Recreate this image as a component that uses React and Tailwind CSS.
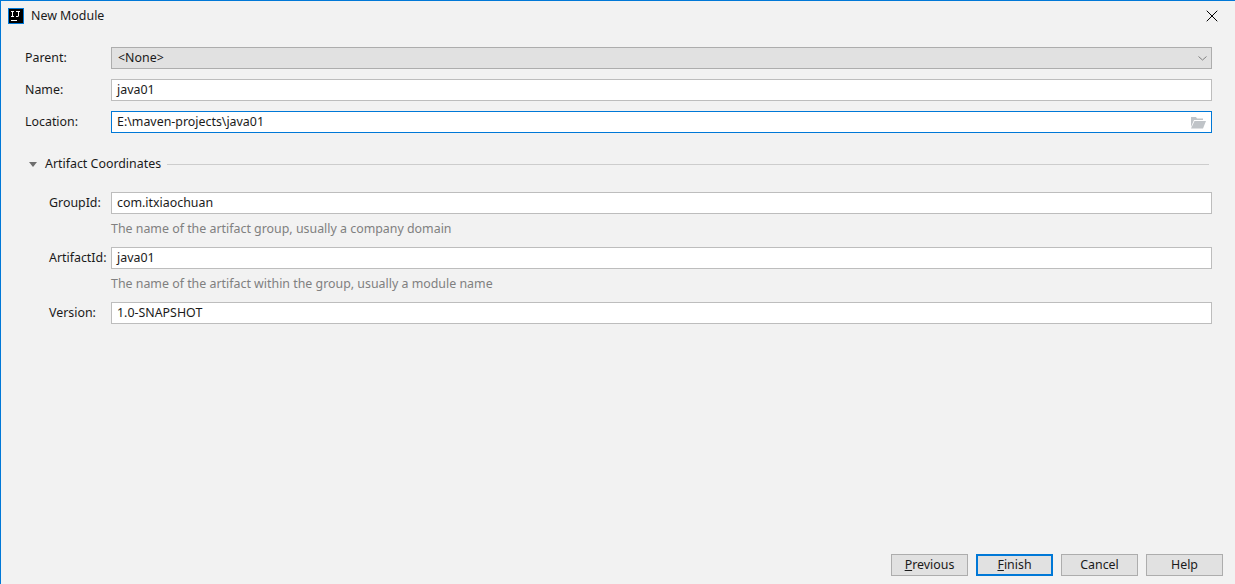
import { X } from "lucide-react";

const font = { fontFamily: '"Noto Sans", sans-serif' };

function Field({ label, value, indent, focused, children }) {
  return (
    <div className="flex h-[22px] items-center">
      <label className={`${indent ? "ml-[48px] w-[62px]" : "ml-[24px] w-[86px]"} text-[#1a1a1a]`}>{label}</label>
      <div
        className={`flex h-full flex-1 items-center border bg-white pl-[5px] pr-[5px] ${
          focused ? "border-[#0078d7]" : "border-[#bdbdbd]"
        }`}
      >
        <span className="flex-1 text-[#1a1a1a]">{value}</span>
        {children}
      </div>
    </div>
  );
}

function Hint({ children }) {
  return <p className="mt-[6px] mb-[9px] ml-[110px] h-[18px] leading-[18px] text-[#808080]">{children}</p>;
}

function Btn({ mnemonic, rest, label, primary }) {
  return (
    <button
      className={`flex h-[22px] w-[77px] items-center justify-center bg-[#e1e1e1] text-[#1a1a1a] ${
        primary ? "border-2 border-[#0078d7]" : "border border-[#adadad]"
      }`}
    >
      {mnemonic ? (
        <>
          <span className="underline">{mnemonic}</span>
          {rest}
        </>
      ) : (
        label
      )}
    </button>
  );
}

export default function App() {
  return (
    <div
      className="flex h-[584px] w-[1235px] flex-col overflow-hidden border-t border-l border-[#0078d7] bg-[#f2f2f2] text-[12.4px] leading-[18px]"
      style={font}
    >
      {/* title bar */}
      <div className="flex h-[29px] items-center pl-[7px] pr-[13px]">
        <svg width="16" height="16" viewBox="0 0 16 16" className="shrink-0">
          <rect x="0" y="0" width="16" height="16" fill="#0078d7" />
          <rect x="1" y="1" width="14" height="14" fill="#000" />
          <rect x="3" y="3" width="3" height="1" fill="#fff" />
          <rect x="4" y="3" width="1" height="6" fill="#fff" />
          <rect x="3" y="8" width="3" height="1" fill="#fff" />
          <path d="M8 3h4v1h-1v4l-1 1H8V8h2V4H8z" fill="#fff" />
          <rect x="3" y="12" width="6" height="1" fill="#fff" />
        </svg>
        <span className="ml-[7px] flex-1 text-[#1a1a1a]">New Module</span>
        <X size={20} strokeWidth={1.2} className="text-black" />
      </div>

      {/* form */}
      <div className="flex flex-1 flex-col pr-[23px] pt-[17px]">
        <div className="flex h-[22px] items-center">
          <label className="ml-[24px] w-[86px] text-[#1a1a1a]">Parent:</label>
          <div className="flex h-full flex-1 items-center border border-[#adadad] bg-[#e1e1e1] pl-[6px] pr-[4px]">
            <span className="flex-1 text-[#1a1a1a]">&lt;None&gt;</span>
            <svg width="9" height="5" viewBox="0 0 9 5" className="shrink-0">
              <path d="M0.5 0.5L4.5 4L8.5 0.5" fill="none" stroke="#808080" strokeWidth="1" />
            </svg>
          </div>
        </div>
        <div className="mt-[10px]">
          <Field label="Name:" value="java01" />
        </div>
        <div className="mt-[10px]">
          <Field label="Location:" value="E:\maven-projects\java01" focused>
            <svg width="16" height="13" viewBox="0 0 16 13" className="shrink-0">
              <path d="M1 1h5l1 1.5h6V4H4L1 11z" fill="#c0c4c8" />
              <path d="M4.5 5H16l-3 7.5H1z" fill="#c0c4c8" />
            </svg>
          </Field>
        </div>

        <div className="mt-[22px] flex h-[18px] items-center pl-[28px]">
          <span className="h-0 w-0 border-x-[4px] border-t-[5px] border-x-transparent border-t-[#6e6e6e]" />
          <span className="ml-[8px] text-[#1a1a1a]">Artifact Coordinates</span>
          <span className="ml-[6px] mr-[3px] h-px flex-1 bg-[#cdcdcd]" />
        </div>

        <div className="mt-[19px]">
          <Field label="GroupId:" value="com.itxiaochuan" indent />
          <Hint>The name of the artifact group, usually a company domain</Hint>
          <Field label="ArtifactId:" value="java01" indent />
          <Hint>The name of the artifact within the group, usually a module name</Hint>
          <Field label="Version:" value="1.0-SNAPSHOT" indent />
        </div>
      </div>

      {/* footer buttons */}
      <div className="flex justify-end gap-[8px] pb-[8px] pr-[12px]">
        <Btn mnemonic="P" rest="revious" />
        <Btn mnemonic="F" rest="inish" primary />
        <Btn label="Cancel" />
        <Btn label="Help" />
      </div>
    </div>
  );
}
